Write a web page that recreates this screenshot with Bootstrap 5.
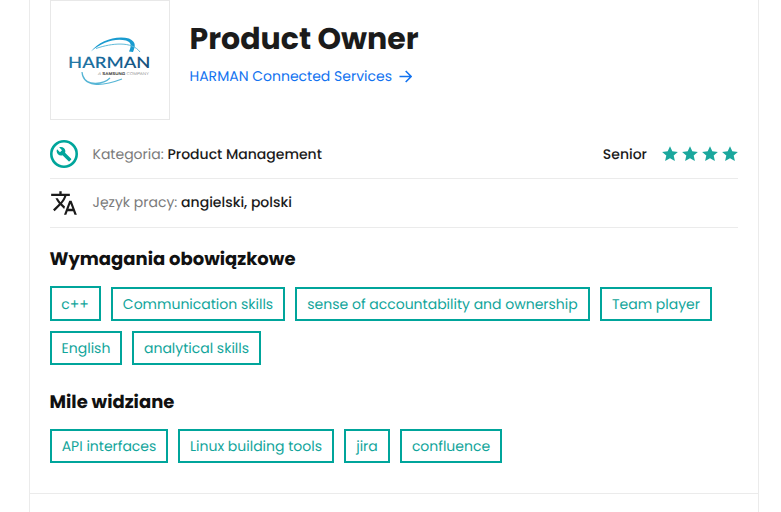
<!DOCTYPE html>
<html lang="pl">
<head>
<meta charset="utf-8">
<meta name="viewport" content="width=device-width, initial-scale=1">
<title>Product Owner</title>
<link href="https://cdn.jsdelivr.net/npm/bootstrap@5.3.0/dist/css/bootstrap.min.css" rel="stylesheet">
<style>
body{font-family:Poppins,Inter,"Open Sans",sans-serif;font-size:14px;line-height:21px;color:#1b1b1b;background:#fff;overflow:hidden;text-rendering:geometricPrecision;-webkit-font-smoothing:antialiased}
.offer{width:730px;height:512px;margin-left:29px;border:solid #ebebeb;border-width:0 1px}
.offer-main{height:494px;padding:0 20px;border-bottom:1px solid #ebebeb}
.logo-box{width:120px;height:120px;border:1px solid #e8e8e8}
.offer-intro{padding-left:19.500px}
.offer-title{font-size:30px;font-weight:700;line-height:40px;margin:19px 0 7px;color:#1b1b1b}
.company{color:#1273f0}
.company-arrow{margin-left:7px}
.meta-row{border-bottom:1px solid #ebebeb}
.meta-a{height:49px;margin-top:10px}
.meta-b{height:49px}
.meta-b .meta-text{margin-top:-1px}
.meta-icon{width:28px;margin-right:14.500px}
.muted{color:#7b7b7b}
.val{font-weight:500}
.level{margin-right:15px}
.sec{font-size:18px;font-weight:700;line-height:27px;color:#111;margin:0 0 0 -.5px}
.sec-required{margin-top:18px}
.sec-nice{margin-top:24px}
.tag-list{gap:10px;margin-top:13px}
.sec-required + .tag-list{margin-top:14px}
.tag{height:34px;border:2px solid #00a59b;color:#12a59b;line-height:30px;text-align:center;white-space:nowrap}
.tag-tall{height:35px;line-height:32px;margin-top:-1px;padding-right:1px}
.w46{width:46px}.w51{width:51px}.w72{width:72px}.w102{width:102px}.w112{width:112px}.w118{width:118px}.w129{width:129px}.w156{width:156px}.w174{width:174px}.w295{width:295px}
</style>
</head>
<body>
<main class="offer"><section class="offer-main">
<header class="d-flex">
<div class="logo-box flex-shrink-0">
<svg class="d-block" width="118" height="118" viewBox="51 1 118 118">
<defs><linearGradient id="g"><stop stop-color="#277ba7"/><stop offset=".5" stop-color="#15679a"/><stop offset="1" stop-color="#174f79"/></linearGradient></defs>
<path d="M91 51.500C99 41 116 35 129 38.500C137 42 135 47 133 52L129 51.500C132 45 131 42 126 40.500C115 38 102 42 91 51.500Z" fill="#199bd0"/>
<path d="M96 48.500C112 43 132 41 140 52" fill="none" stroke="#61bbda" stroke-width="1"/>
<path d="M82 72C83 87 101 87 122 79M83 76C87 87 104 84 110 78" fill="none" stroke="#55b5d5" stroke-width="1.200"/>
<text x="68" y="67.800" textLength="82.500" lengthAdjust="spacingAndGlyphs" font-family="Lato" font-size="15.500" font-weight="600" fill="url(#g)">HARMAN</text>
<text x="98" y="75" textLength="51" lengthAdjust="spacingAndGlyphs" font-family="Liberation Sans" font-size="4.200" fill="#999"><tspan font-style="italic">A</tspan> <tspan font-weight="700" fill="#333">SAMSUNG</tspan> COMPANY</text>
</svg></div>
<div class="offer-intro"><h1 class="offer-title">Product Owner</h1>
<div class="company d-flex align-items-center"><span>HARMAN Connected Services</span><svg class="company-arrow" width="13" height="13" viewBox="0 0 13 13" fill="none" stroke="currentColor" stroke-width="1.6"><path d="M.5 6.500H12M6.700 1L12.200 6.500L6.700 12"/></svg></div></div>
</header>
<div class="meta-row meta-a d-flex align-items-center">
<svg class="meta-icon" width="28" height="28" viewBox="0 0 28 28"><circle cx="14" cy="14" r="12.7" fill="none" stroke="#00a59b" stroke-width="2.6"/><svg x="6" y="6.2" width="16" height="16" viewBox="0 0 24 24"><path fill="#00a59b" d="M22.7 19l-9.1-9.1c.9-2.3.4-5-1.5-6.9-2-2-5-2.4-7.4-1.3L9 6 6 9 1.6 4.7C.4 7.1.9 10.1 2.9 12.1c1.900 1.900 4.600 2.400 6.900 1.500l9.100 9.100c.4.4 1 .4 1.400 0l2.300-2.300c.5-.4.5-1.100.1-1.400z"/></svg></svg>
<div><span class="muted">Kategoria:</span> <span class="val">Product Management</span></div>
<div class="ms-auto d-flex align-items-center"><span class="val level">Senior</span>
<svg width="76" height="16" viewBox="0 0 76 16" fill="#1ba79d"><defs><path id="s" d="M8 .2L10.3 5.300L15.900 5.900L11.700 9.600L12.900 15.100L8 12.300L3.100 15.100L4.300 9.600L.1 5.900L5.700 5.300Z"/></defs><use href="#s"/><use href="#s" x="20"/><use href="#s" x="40"/><use href="#s" x="60"/></svg></div>
</div>
<div class="meta-row meta-b d-flex align-items-center">
<svg class="meta-icon" width="28" height="28" viewBox="0 0 24 24"><path fill="#1b1b1b" d="M12.870 15.070l-2.540-2.510.03-.03c1.740-1.940 2.980-4.170 3.710-6.530H17V4h-7V2H8v2H1v1.990h11.170C11.500 7.920 10.440 9.750 9 11.350 8.070 10.320 7.300 9.190 6.690 8h-2c.73 1.630 1.730 3.170 2.980 4.560l-5.090 5.020L4 19l5-5 3.110 3.110.76-2.040zM18.500 10h-2L12 22h2l1.120-3h4.750L21 22h2l-4.500-12zm-2.620 7l1.620-4.330L19.120 17h-3.240z"/></svg>
<div class="meta-text"><span class="muted">Język pracy:</span> <span class="val">angielski, polski</span></div>
</div>
<h2 class="sec sec-required">Wymagania obowiązkowe</h2>
<div class="tag-list d-flex flex-wrap">
<div class="tag tag-tall w51">c++</div><div class="tag w174">Communication skills</div><div class="tag w295">sense of accountability and ownership</div><div class="tag w112">Team player</div><div class="tag w72">English</div><div class="tag w129">analytical skills</div></div>
<h2 class="sec sec-nice">Mile widziane</h2>
<div class="tag-list d-flex flex-wrap">
<div class="tag w118">API interfaces</div><div class="tag w156">Linux building tools</div><div class="tag w46">jira</div><div class="tag w102">confluence</div></div>
</section></main>
<script src="https://cdn.jsdelivr.net/npm/bootstrap@5.3.0/dist/js/bootstrap.bundle.min.js"></script>
</body></html>
